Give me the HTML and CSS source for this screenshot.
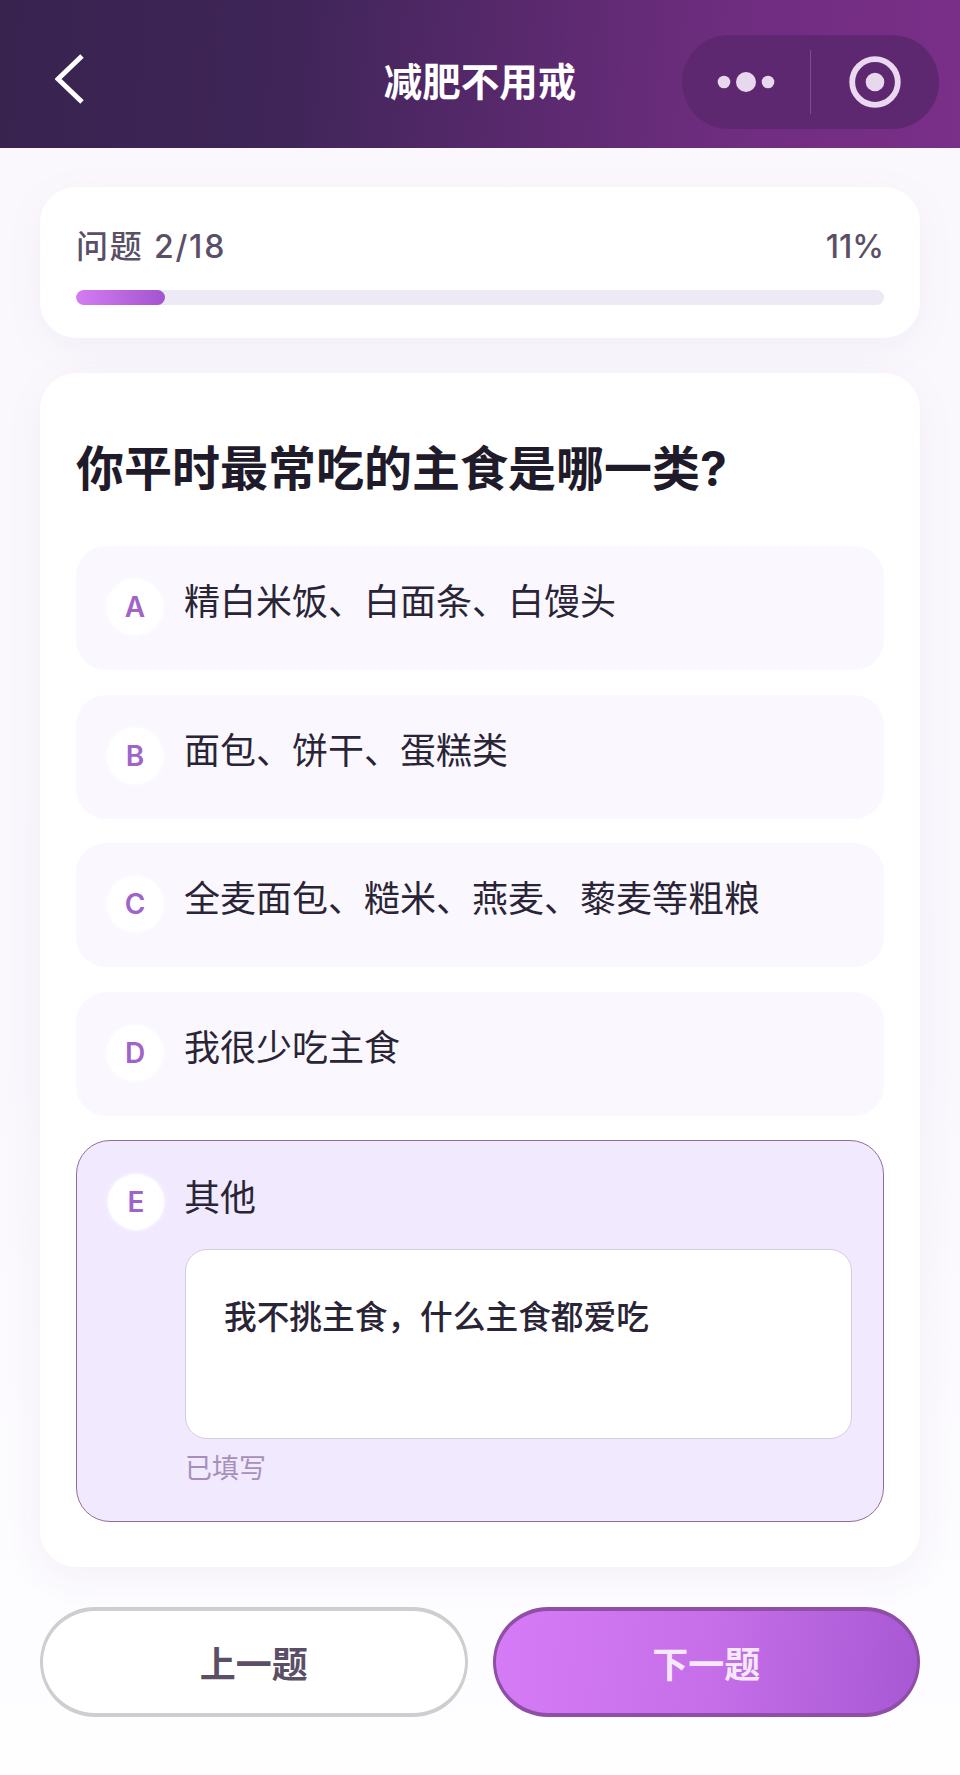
FILE: index.html
```html
<!DOCTYPE html>
<html lang="zh-CN">

<head>
    <meta charset="UTF-8">
    <meta name="viewport" content="width=device-width, initial-scale=1.0">
    <title>减肥不用戒</title>
    <link rel="stylesheet" href="styles.css">
</head>

<body>

    <header class="nav-bar">
        <svg class="back-icon" width="30" height="50" viewBox="0 0 30 50">
            <polyline points="27,2 3,25 27,48" />
        </svg>
        <div class="nav-title">减肥不用戒</div>
        <div class="capsule">
            <div class="capsule-half">
                <svg width="60" height="24" viewBox="0 0 60 24">
                    <circle cx="8" cy="12" r="6.3" />
                    <circle cx="30" cy="12" r="10" />
                    <circle cx="52" cy="12" r="6.3" />
                </svg>
            </div>
            <div class="capsule-line"></div>
            <div class="capsule-half">
                <svg width="54" height="54" viewBox="0 0 54 54">
                    <circle class="ring" cx="27" cy="27" r="22.8" />
                    <circle cx="27" cy="27" r="9.3" />
                </svg>
            </div>
        </div>
    </header>

    <main class="page">
        <section class="card progress-card">
            <div class="progress-head">
                <span class="progress-count">问题 2/18</span>
                <span>11%</span>
            </div>
            <div class="progress-track">
                <div class="progress-fill" style="width: 11%;"></div>
            </div>
        </section>

        <section class="card question-card">
            <h1>你平时最常吃的主食是哪一类?</h1>
            <div class="options">
                <div class="option">
                    <span class="badge">A</span>
                    <span class="option-text">精白米饭、白面条、白馒头</span>
                </div>
                <div class="option">
                    <span class="badge">B</span>
                    <span class="option-text">面包、饼干、蛋糕类</span>
                </div>
                <div class="option">
                    <span class="badge">C</span>
                    <span class="option-text">全麦面包、糙米、燕麦、藜麦等粗粮</span>
                </div>
                <div class="option">
                    <span class="badge">D</span>
                    <span class="option-text">我很少吃主食</span>
                </div>
                <div class="option option-active">
                    <div class="option-row">
                        <span class="badge">E</span>
                        <span class="option-text">其他</span>
                    </div>
                    <div class="other-box">
                        <textarea class="other-input">我不挑主食&#65292;什么主食都爱吃</textarea>
                        <div class="other-hint">已填写</div>
                    </div>
                </div>
            </div>
        </section>

        <div class="actions">
            <button class="btn btn-prev">上一题</button>
            <button class="btn btn-next">下一题</button>
        </div>
    </main>

</body>

</html>
```

FILE: styles.css
```css
body {
    font-family: Inter, "Noto Sans CJK SC", sans-serif;
    background: linear-gradient(180deg, #fbf8fd 0%, #faf8fd 60%, #fefdff 100%);
    margin: 0;
    padding: 0;
    height: 1775px;
    overflow: hidden;
}

.nav-bar {
    height: 148px;
    box-sizing: border-box;
    padding: 35px 21px 0;
    display: grid;
    grid-template-columns: 1fr auto 1fr;
    align-items: start;
    background: linear-gradient(95deg, #38234f 0%, #3f2558 30%, #5f2a72 60%, #6f2d80 76%, #7a2f88 100%);
}

.back-icon {
    margin: 19px 0 0 34px;
    fill: none;
    stroke: #fff;
    stroke-width: 5;
}

.nav-title {
    color: #fff;
    font-size: 38.5px;
    font-weight: 700;
    line-height: 94px;
}

.capsule {
    justify-self: end;
    width: 257px;
    height: 94px;
    border-radius: 47px;
    background-color: #5e2870;
    display: flex;
    align-items: center;
}

.capsule-half {
    flex: 1;
    display: flex;
    justify-content: center;
    align-items: center;
}

.capsule-half svg {
    fill: #e8d8ee;
}

.capsule-half .ring {
    fill: none;
    stroke: #ead8f0;
    stroke-width: 5.8;
}

.capsule-line {
    width: 1px;
    height: 64px;
    background-color: #7f4c8f;
}

.page {
    padding: 0 40px;
}

.card {
    background-color: #fff;
    border-radius: 36px;
    box-shadow: 0 10px 40px rgba(100, 70, 140, 0.06);
}

.progress-card {
    margin-top: 39px;
    height: 151px;
    box-sizing: border-box;
    padding: 36px 36px 0;
}

.progress-head {
    display: flex;
    justify-content: space-between;
    color: #5a4f66;
    font-size: 32px;
    font-weight: 500;
    line-height: 48px;
}

.progress-count {
    letter-spacing: 1.8px;
}

.progress-track {
    margin-top: 19px;
    height: 15px;
    border-radius: 8px;
    background-color: #ede9f5;
    overflow: hidden;
}

.progress-fill {
    height: 100%;
    border-radius: 8px;
    background: linear-gradient(90deg, #d47cf2, #a254cf);
}

.question-card {
    margin-top: 35px;
    padding: 64px 36px 45px;
}

h1 {
    margin: 0 0 45px;
    color: #1f1b2a;
    font-size: 48px;
    font-weight: 700;
    line-height: 64px;
}

.options {
    display: flex;
    flex-direction: column;
    gap: 24.5px;
}

.option {
    height: 124px;
    box-sizing: border-box;
    padding: 0 31px;
    border-radius: 30px;
    background-color: #faf8fe;
    display: flex;
    align-items: center;
    gap: 21px;
}

.badge {
    flex: none;
    width: 56px;
    height: 56px;
    margin-top: -2px;
    border-radius: 50%;
    background-color: #fff;
    box-shadow: 0 0 5px #fff;
    color: #a064c8;
    font-size: 28px;
    font-weight: 600;
    line-height: 56px;
    text-align: center;
}

.option-text {
    margin-bottom: 12px;
    color: #2a2536;
    font-size: 36px;
    line-height: 50px;
}

.option-active {
    height: 382px;
    display: block;
    padding: 0 31px;
    background-color: #f1e9fd;
    border: 1px solid #8f6f99;
    border-radius: 34px;
}

.option-row {
    display: flex;
    align-items: flex-start;
    gap: 20px;
    padding-top: 33px;
}

.option-row .badge {
    margin-top: 0;
}

.option-row .option-text {
    margin: -1px 0 0;
}

.other-box {
    margin-left: 77px;
    margin-top: 19px;
}

.other-input {
    display: block;
    width: 100%;
    height: 190px;
    box-sizing: border-box;
    padding: 44px 38px;
    border: 1px solid #d4ccdf;
    border-radius: 22px;
    background-color: #fff;
    color: #2a2536;
    font-family: inherit;
    font-size: 32.7px;
    font-weight: 500;
    line-height: 46px;
    resize: none;
    outline: none;
    overflow: hidden;
}

.other-hint {
    margin-top: 11px;
    color: #a88fba;
    font-size: 27px;
    line-height: 38px;
}

.actions {
    margin-top: 40px;
    display: flex;
    gap: 25px;
}

.btn {
    flex: 1;
    height: 110px;
    border-radius: 55px;
    font-family: inherit;
    font-size: 36px;
    font-weight: 700;
    cursor: pointer;
}

.btn-prev {
    background-color: #fff;
    border: solid #cfcdd0;
    border-width: 4px 3px;
    color: #5a4f66;
}

.btn-next {
    background: linear-gradient(95deg, #d67bf6 0%, #c66fe9 50%, #a858d4 100%);
    border: solid #8f4fa6;
    border-width: 4px 3px;
    color: #f6e8fb;
}
```
